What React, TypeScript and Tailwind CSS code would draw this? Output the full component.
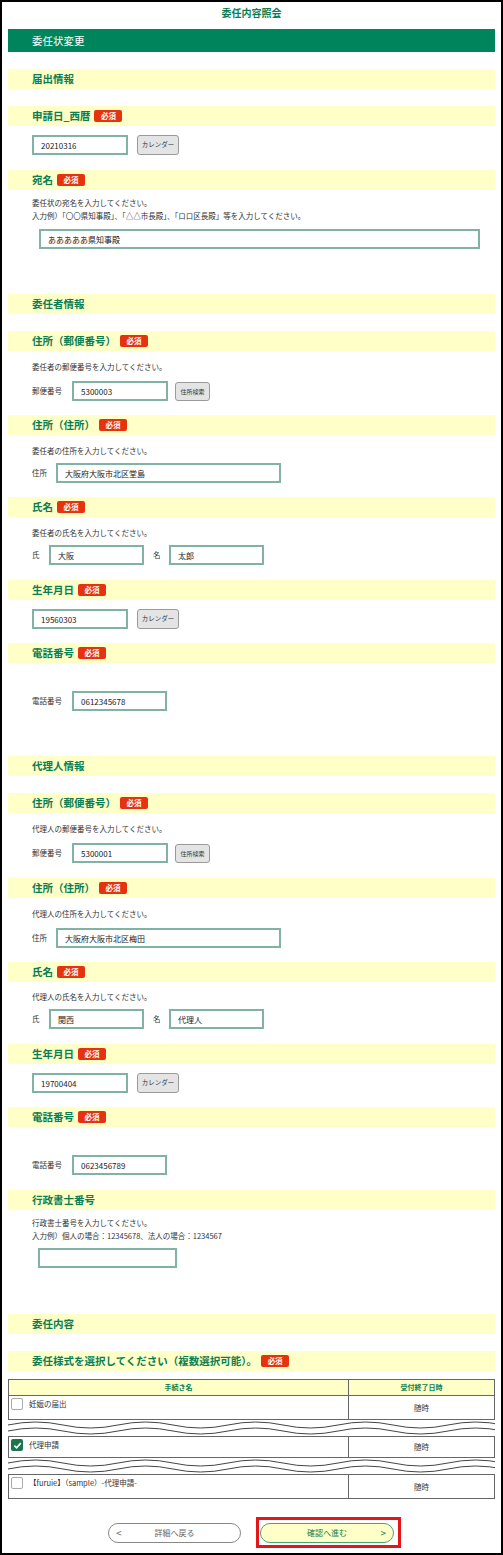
import React from 'react'

const FONT = "font-['Noto_Sans_CJK_JP','Noto_Sans',sans-serif]"

function Badge() {
    return (
        <span className="ml-[4px] inline-flex h-[12px] w-[28px] items-center justify-center rounded-[2px] bg-[#e6330f] text-[7.5px] font-bold leading-none text-white">
            必須
        </span>
    )
}

function Band({ title, req, className = '' }: { title: string; req?: boolean; className?: string }) {
    return (
        <div className={`flex h-[20px] items-center bg-[#ffffc8] pl-[24px] ${className}`}>
            <span className="text-[10.5px] font-bold leading-none text-[#0b7d52]">{title}</span>
            {req && <Badge />}
        </div>
    )
}

function Note({ lines, className = '' }: { lines: string[]; className?: string }) {
    return (
        <div className={`pl-[24px] text-[7.5px] leading-[13px] text-[#333] ${className}`}>
            {lines.map((l) => (
                <div key={l}>{l}</div>
            ))}
        </div>
    )
}

function Field({ value = '', className = '' }: { value?: string; className?: string }) {
    return (
        <input
            readOnly
            value={value}
            className={`block h-[20px] border-2 border-[#80b3a5] bg-white pl-[7px] text-[8px] text-[#222] outline-none ${className}`}
        />
    )
}

function GrayBtn({ label, className = '' }: { label: string; className?: string }) {
    return (
        <button className={`flex items-center justify-center rounded-[3px] border border-[#9a9a9a] bg-[#e4e4e4] text-[6.5px] text-[#333] ${className}`}>
            {label}
        </button>
    )
}

function Label({ text, w }: { text: string; w: string }) {
    return <span className={`${w} text-[7.5px] leading-none text-[#333]`}>{text}</span>
}

function DateRow({ value, className = '' }: { value: string; className?: string }) {
    return (
        <div className={`flex items-center pl-[24px] ${className}`}>
            <Field value={value} className="w-[96px]" />
            <GrayBtn label="カレンダー" className="ml-[9px] h-[20px] w-[42px]" />
        </div>
    )
}

function ZipRow({ value, className = '' }: { value: string; className?: string }) {
    return (
        <div className={`flex items-center pl-[24px] ${className}`}>
            <Label text="郵便番号" w="w-[40px]" />
            <Field value={value} className="w-[96px]" />
            <GrayBtn label="住所検索" className="ml-[7px] h-[19px] w-[35px] text-[6px]" />
        </div>
    )
}

function AddrRow({ value, className = '' }: { value: string; className?: string }) {
    return (
        <div className={`flex items-center pl-[24px] ${className}`}>
            <Label text="住所" w="w-[24px]" />
            <Field value={value} className="w-[225px]" />
        </div>
    )
}

function NameRow({ sei, mei, className = '' }: { sei: string; mei: string; className?: string }) {
    return (
        <div className={`flex items-center pl-[24px] ${className}`}>
            <Label text="氏" w="w-[17px]" />
            <Field value={sei} className="w-[95px]" />
            <span className="ml-[9px] w-[16px] text-[7.5px] leading-none text-[#333]">名</span>
            <Field value={mei} className="w-[95px]" />
        </div>
    )
}

function TelRow({ value, className = '' }: { value: string; className?: string }) {
    return (
        <div className={`flex items-center pl-[24px] ${className}`}>
            <Label text="電話番号" w="w-[40px]" />
            <Field value={value} className="w-[95px]" />
        </div>
    )
}

function wavePath(y0: number) {
    let d = `M0 ${y0}`
    for (let i = 0; i < 10; i++) {
        const x = i * 55
        d += ` Q${x + 27.5} ${y0 + (i % 2 ? 6 : -6)} ${x + 55} ${y0}`
    }
    return d
}

function Wave() {
    return (
        <svg width="487" height="16" viewBox="0 0 487 16" className="block">
            <path d={wavePath(5)} fill="none" stroke="#444" strokeWidth="1" />
            <path d={wavePath(11)} fill="none" stroke="#444" strokeWidth="1" />
        </svg>
    )
}

function CheckBox({ checked }: { checked?: boolean }) {
    if (checked) {
        return (
            <span className="flex h-[12px] w-[12px] items-center justify-center rounded-[2px] bg-[#1b7650]">
                <svg width="9" height="9" viewBox="0 0 10 10">
                    <path d="M1.5 5.2 L4 7.6 L8.6 2.4" fill="none" stroke="#fff" strokeWidth="1.8" />
                </svg>
            </span>
        )
    }
    return <span className="block h-[12px] w-[12px] rounded-[2px] border border-[#aaa] bg-white" />
}

function Row({ name, checked, h }: { name: string; checked?: boolean; h: string }) {
    return (
        <div className={`flex ${h}`}>
            <div className="flex w-[340px] items-start gap-[6px] border-r border-[#666] pl-[2px] pt-[2px]">
                <CheckBox checked={checked} />
                <span className="mt-[1px] text-[7.5px] leading-[10px] text-[#333]">{name}</span>
            </div>
            <div className="flex flex-1 items-center justify-center text-[7.5px] text-[#333]">随時</div>
        </div>
    )
}

export default function App() {
    return (
        <div className={`h-[1555px] w-[503px] border-2 border-black bg-white px-[6px] ${FONT}`}>
            <div className="flex h-[27px] justify-center pt-[4px] text-[10px] font-bold leading-[14px] text-[#0b7d52]">
                委任内容照会
            </div>
            <div className="flex h-[23px] items-center bg-[#00845c] pl-[24px] text-[10.5px] text-white">委任状変更</div>

            <Band title="届出情報" className="mt-[17px]" />
            <Band title="申請日_西暦" req className="mt-[17px]" />
            <DateRow value="20210316" className="mt-[9px]" />

            <Band title="宛名" req className="mt-[15px]" />
            <Note
                className="mt-[6px]"
                lines={[
                    '委任状の宛名を入力してください。',
                    '入力例）「〇〇県知事殿」、「△△市長殿」、「ロロ区長殿」等を入力してください。',
                ]}
            />
            <div className="mt-[7px] pl-[31px]">
                <Field value="あああああ県知事殿" className="w-[441px]" />
            </div>

            <Band title="委任者情報" className="mt-[45px]" />
            <Band title="住所（郵便番号）" req className="mt-[17px]" />
            <Note className="mt-[9px]" lines={['委任者の郵便番号を入力してください。']} />
            <ZipRow value="5300003" className="mt-[8px]" />

            <Band title="住所（住所）" req className="mt-[14px]" />
            <Note className="mt-[9px]" lines={['委任者の住所を入力してください。']} />
            <AddrRow value="大阪府大阪市北区堂島" className="mt-[6px]" />

            <Band title="氏名" req className="mt-[14px]" />
            <Note className="mt-[9px]" lines={['委任者の氏名を入力してください。']} />
            <NameRow sei="大阪" mei="太郎" className="mt-[6px]" />

            <Band title="生年月日" req className="mt-[15px]" />
            <DateRow value="19560303" className="mt-[9px]" />

            <Band title="電話番号" req className="mt-[14px]" />
            <TelRow value="0612345678" className="mt-[28px]" />

            <Band title="代理人情報" className="mt-[45px]" />
            <Band title="住所（郵便番号）" req className="mt-[17px]" />
            <Note className="mt-[9px]" lines={['代理人の郵便番号を入力してください。']} />
            <ZipRow value="5300001" className="mt-[8px]" />

            <Band title="住所（住所）" req className="mt-[15px]" />
            <Note className="mt-[9px]" lines={['代理人の住所を入力してください。']} />
            <AddrRow value="大阪府大阪市北区梅田" className="mt-[8px]" />

            <Band title="氏名" req className="mt-[14px]" />
            <Note className="mt-[8px]" lines={['代理人の氏名を入力してください。']} />
            <NameRow sei="関西" mei="代理人" className="mt-[6px]" />

            <Band title="生年月日" req className="mt-[15px]" />
            <DateRow value="19700404" className="mt-[9px]" />

            <Band title="電話番号" req className="mt-[14px]" />
            <TelRow value="0623456789" className="mt-[28px]" />

            <Band title="行政書士番号" className="mt-[15px]" />
            <Note
                className="mt-[6px]"
                lines={['行政書士番号を入力してください。', '入力例）個人の場合：12345678、法人の場合：1234567']}
            />
            <div className="mt-[6px] pl-[30px]">
                <Field className="w-[139px]" />
            </div>

            <Band title="委任内容" className="mt-[46px]" />
            <Band title="委任様式を選択してください（複数選択可能）。" req className="mt-[17px]" />

            <div className="mt-[8px]">
                <div className="border border-[#666]">
                    <div className="flex h-[16px] border-b border-[#666] bg-[#ffffc8] text-[7px] font-bold text-[#0b7d52]">
                        <div className="flex w-[340px] items-center justify-center border-r border-[#666]">手続き名</div>
                        <div className="flex flex-1 items-center justify-center">受付終了日時</div>
                    </div>
                    <Row name="妊娠の届出" h="h-[23px]" />
                </div>
                <Wave />
                <div className="border border-[#666]">
                    <Row name="代理申請" checked h="h-[20px]" />
                </div>
                <Wave />
                <div className="border border-[#666]">
                    <Row name="【furuie】（sample）-代理申請-" h="h-[23px]" />
                </div>
            </div>

            <div className="mt-[18px] flex items-center pl-[100px]">
                <button className="flex h-[20px] w-[133px] items-center rounded-full border border-[#888] bg-white px-[7px] text-[8px] text-[#666]">
                    <span className="w-[12px] text-left text-[10px] leading-none">&lt;</span>
                    <span className="flex-1 text-center">詳細へ戻る</span>
                    <span className="w-[12px]" />
                </button>
                <div className="ml-[15px] border-[3px] border-[#e3161c] pb-[2px] pl-[1px] pr-[4px] pt-[3px]">
                    <button className="flex h-[20px] w-[134px] items-center rounded-full border border-[#4aa27a] bg-[#ffffc8] px-[7px] text-[8px] text-[#0b7d52]">
                        <span className="w-[12px]" />
                        <span className="flex-1 text-center">確認へ進む</span>
                        <span className="w-[12px] text-right text-[10px] leading-none">&gt;</span>
                    </button>
                </div>
            </div>
        </div>
    )
}
